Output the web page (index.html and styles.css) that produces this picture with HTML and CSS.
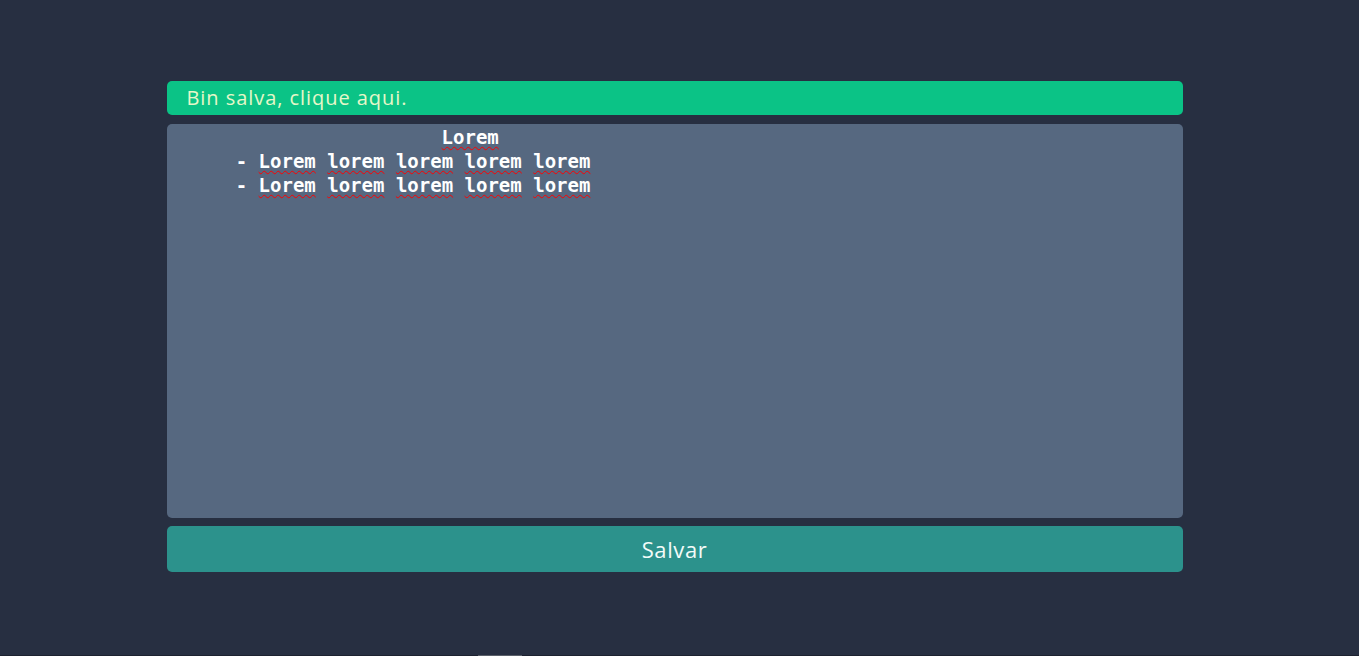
FILE: index.html
```html
<!DOCTYPE html>
<html lang="pt-BR">
<head>
<meta charset="utf-8">
<title>Bin</title>
<link rel="stylesheet" href="styles.css">
</head>
<body>
<main class="page">
  <a class="notice" href="#">Bin salva, clique aqui.</a>
  <div class="editor" contenteditable="true" spellcheck="false"><div class="line">                       <span class="sp">Lorem</span></div><div class="line">     - <span class="sp">Lorem</span> <span class="sp">lorem</span> <span class="sp">lorem</span> <span class="sp">lorem</span> <span class="sp">lorem</span></div><div class="line">     - <span class="sp">Lorem</span> <span class="sp">lorem</span> <span class="sp">lorem</span> <span class="sp">lorem</span> <span class="sp">lorem</span></div></div>
  <button class="save" type="button">Salvar</button>
</main>
<div class="bottom-bar"><span class="thumb"></span></div>
</body>
</html>
```
FILE: styles.css
```css
html, body {
  margin: 0;
  padding: 0;
  height: 100%;
  background: #272f41;
}
body {
  font-family: "Open Sans", "Noto Sans", sans-serif;
  overflow: hidden;
  position: relative;
}
.page {
  width: 1016px;
  margin: 0 auto;
  padding-top: 81px;
  display: flex;
  flex-direction: column;
  gap: 9px;
  transform: translateX(-5px);
}
.notice {
  display: block;
  height: 34px;
  line-height: 34px;
  background: #0bc386;
  color: #e6f7c9;
  border-radius: 5px;
  padding-left: 20px;
  font-size: 20px;
  letter-spacing: 0.95px;
  text-decoration: none;
}
.editor {
  height: 394px;
  margin-bottom: -1px;
  box-sizing: border-box;
  background: #566880;
  border-radius: 5px;
  padding: 1px 12px;
  color: #ffffff;
  font-family: "DejaVu Sans Mono", monospace;
  font-weight: bold;
  font-size: 19px;
  line-height: 24px;
  white-space: pre;
  outline: none;
}
.sp {
  text-decoration: underline wavy #ff0000;
  text-decoration-thickness: 1px;
  text-underline-offset: 2px;
}
.save {
  height: 46px;
  border: none;
  border-radius: 5px;
  background: #2c928c;
  color: #f3fbf8;
  font-family: "Open Sans", "Noto Sans", sans-serif;
  font-size: 22px;
  letter-spacing: 0.6px;
  cursor: pointer;
}
.bottom-bar {
  position: absolute;
  left: 0;
  right: 0;
  bottom: 0;
  height: 1px;
  background: #1d2230;
}
.thumb {
  position: absolute;
  left: 478px;
  width: 44px;
  height: 1px;
  background: #5a5f69;
}
```
